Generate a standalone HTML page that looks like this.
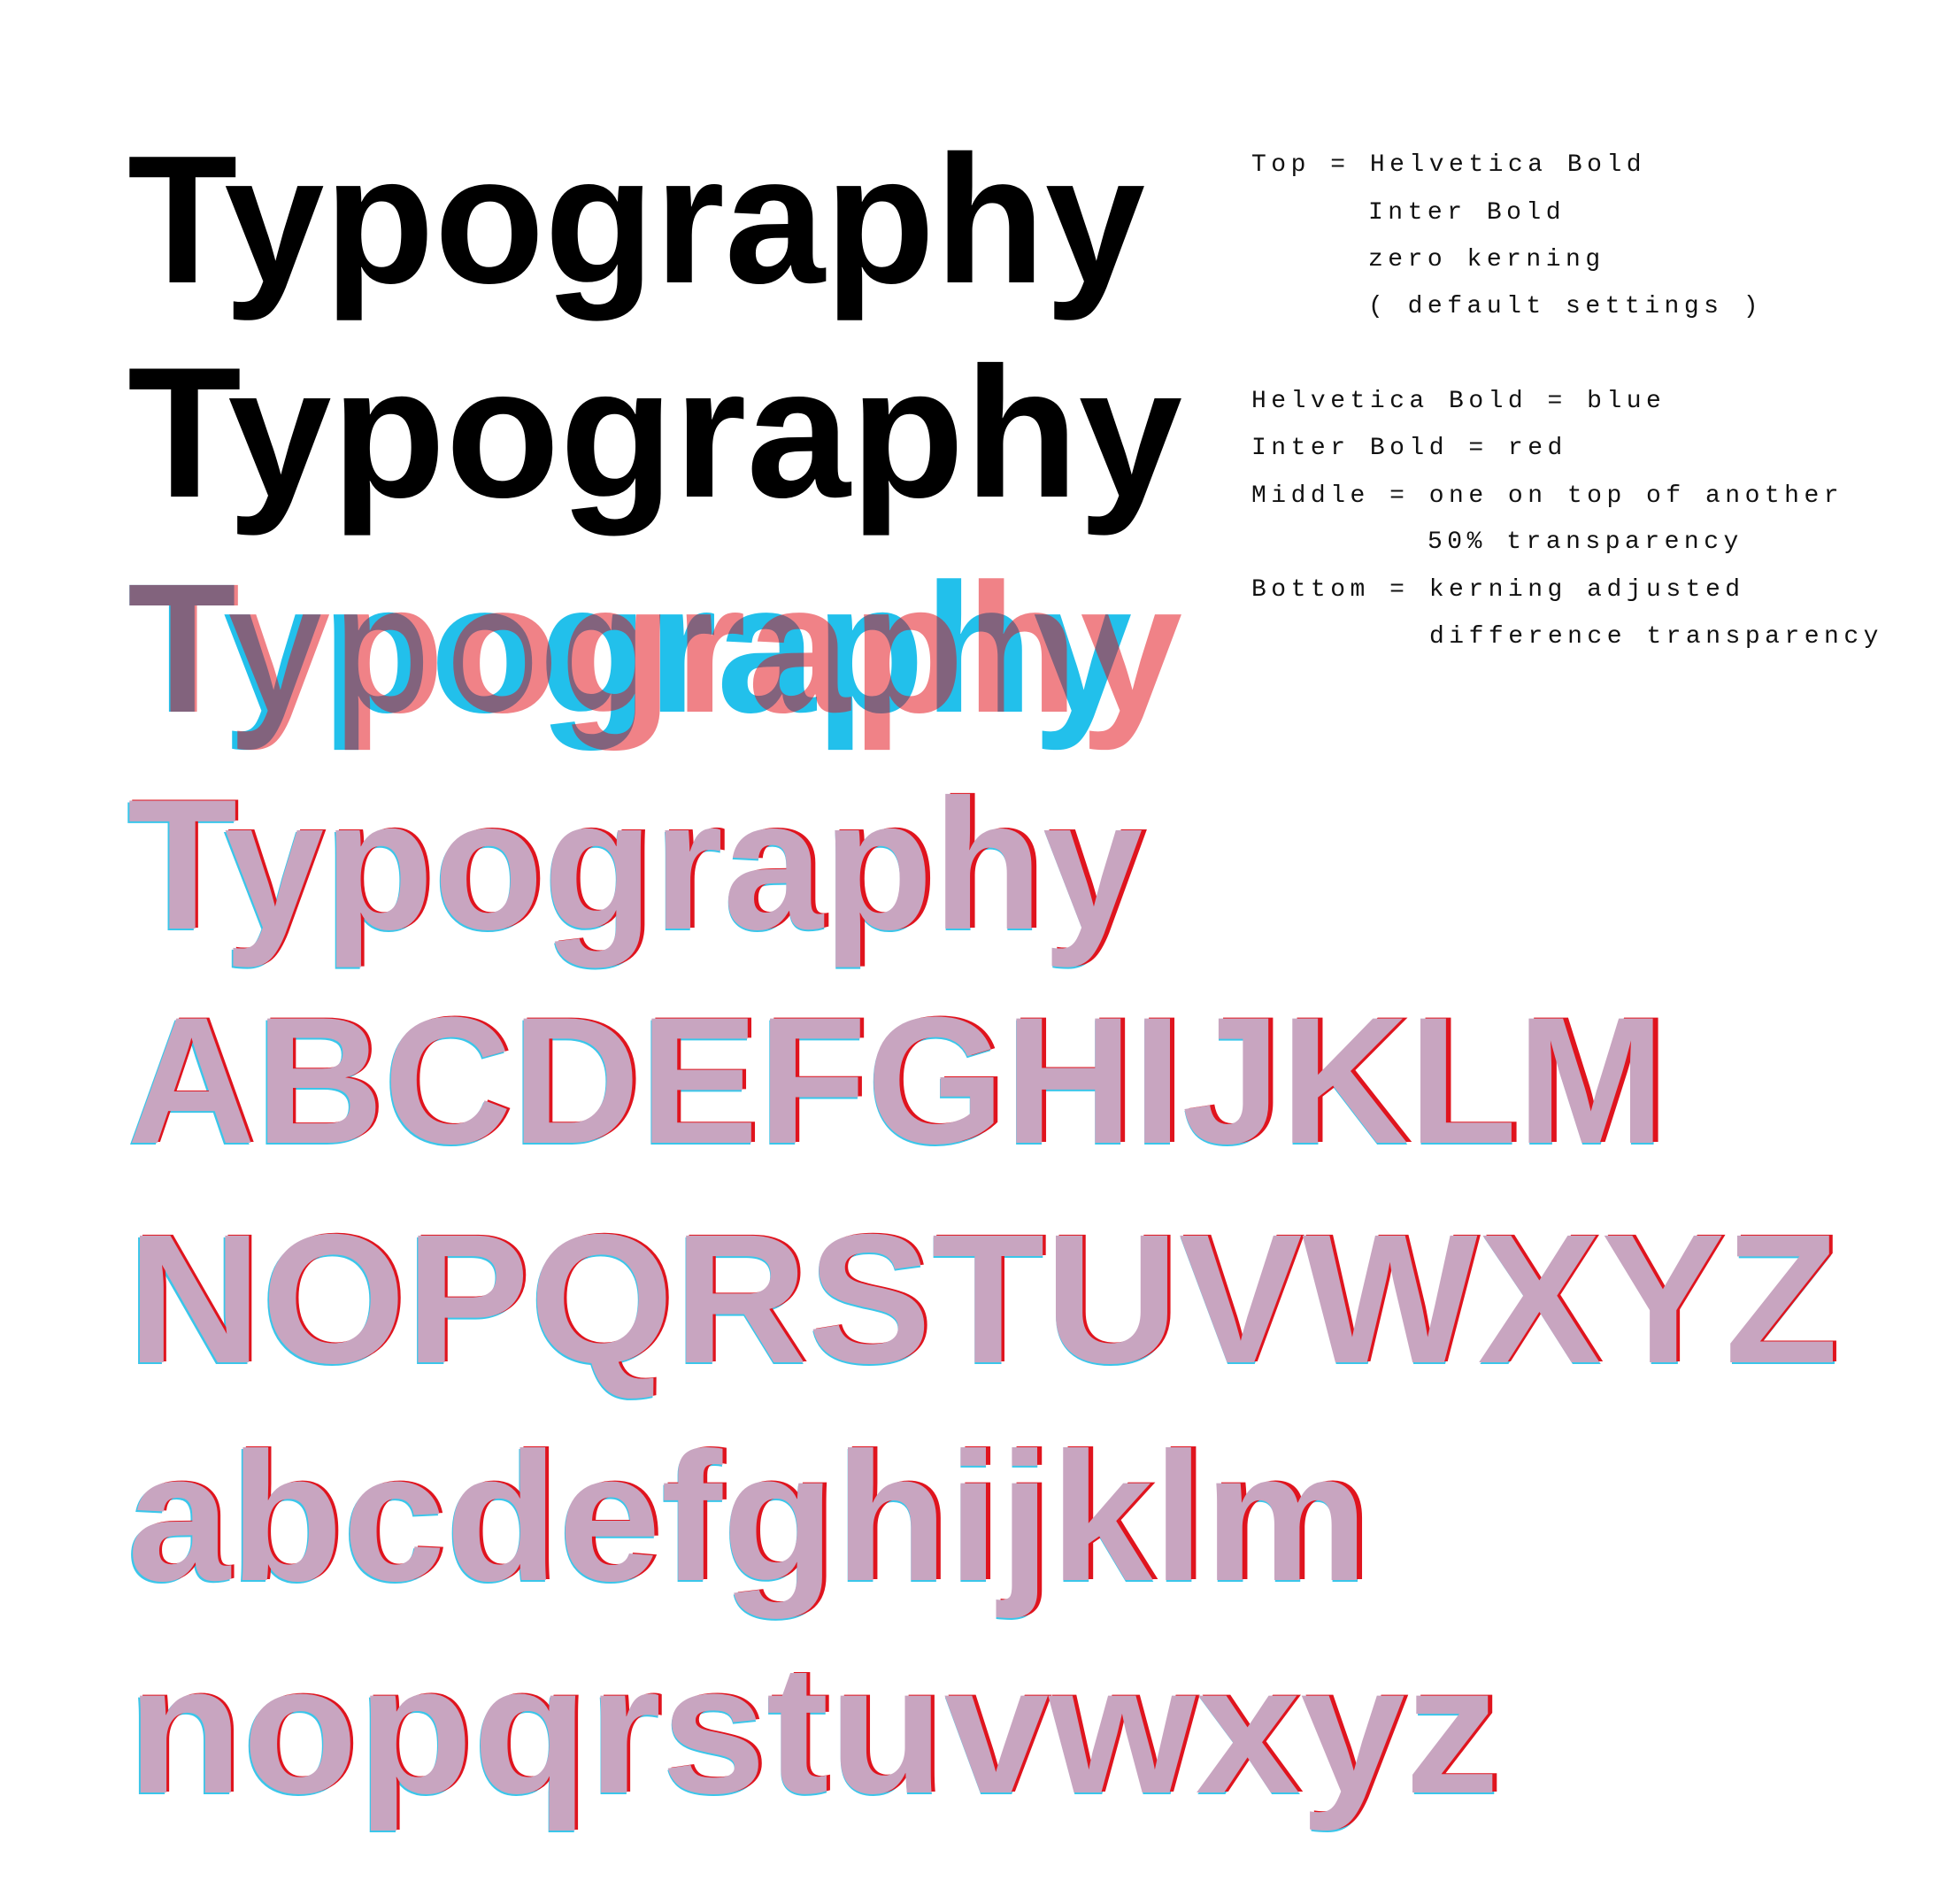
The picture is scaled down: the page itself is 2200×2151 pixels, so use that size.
<!DOCTYPE html>
<html><head><meta charset="utf-8"><style>
html,body{margin:0;padding:0;background:#fff;width:2200px;height:2151px;overflow:hidden}
svg{display:block}
.b{font-family:"Liberation Sans",Arial,sans-serif;font-weight:bold}
.m{font-family:"Liberation Mono",monospace;font-size:28px;fill:#111;letter-spacing:5.5px}
</style></head><body>
<svg width="2200" height="2151" viewBox="0 0 2200 2151" xmlns="http://www.w3.org/2000/svg">
<g class="b" transform="translate(-4,-10)">
<text x="148" y="329" font-size="206" textLength="1150" lengthAdjust="spacingAndGlyphs">Typography</text>
<text x="148" y="571" font-size="210" textLength="1192" lengthAdjust="spacingAndGlyphs">Typography</text>

<text x="148" y="814" font-size="208" fill="#22c0eb" textLength="1135" lengthAdjust="spacingAndGlyphs">Typography</text>
<text x="148" y="814" font-size="208" fill="#e1060f" fill-opacity="0.5" textLength="1192" lengthAdjust="spacing">Typography</text>

<g font-size="210">
<text x="146" y="1061" fill="#3ac6ea" textLength="1150" lengthAdjust="spacingAndGlyphs">Typography</text>
<text x="151" y="1058" fill="#e0141e" textLength="1150" lengthAdjust="spacingAndGlyphs">Typography</text>
<text x="148" y="1059" fill="#c8a5c0" textLength="1147" lengthAdjust="spacingAndGlyphs">Typography</text>
</g>
<g font-size="204">
<text x="146" y="1303" fill="#3ac6ea" textLength="1740" lengthAdjust="spacingAndGlyphs">ABCDEFGHIJKLM</text>
<text x="151" y="1300" fill="#e0141e" textLength="1740" lengthAdjust="spacingAndGlyphs">ABCDEFGHIJKLM</text>
<text x="148" y="1301" fill="#c8a5c0" textLength="1737" lengthAdjust="spacingAndGlyphs">ABCDEFGHIJKLM</text>
</g>
<g font-size="208">
<text x="146" y="1551" fill="#3ac6ea" textLength="1937" lengthAdjust="spacingAndGlyphs">NOPQRSTUVWXYZ</text>
<text x="151" y="1548" fill="#e0141e" textLength="1934" lengthAdjust="spacingAndGlyphs">NOPQRSTUVWXYZ</text>
<text x="148" y="1549" fill="#c8a5c0" textLength="1933" lengthAdjust="spacingAndGlyphs">NOPQRSTUVWXYZ</text>
</g>
<g font-size="207">
<text x="146" y="1797" fill="#3ac6ea" textLength="1405" lengthAdjust="spacingAndGlyphs">abcdefghijklm</text>
<text x="151" y="1794" fill="#e0141e" textLength="1405" lengthAdjust="spacingAndGlyphs">abcdefghijklm</text>
<text x="148" y="1795" fill="#c8a5c0" textLength="1402" lengthAdjust="spacingAndGlyphs">abcdefghijklm</text>
<text x="146" y="2037" fill="#3ac6ea" textLength="1554" lengthAdjust="spacingAndGlyphs">nopqrstuvwxyz</text>
<text x="151" y="2034" fill="#e0141e" textLength="1552" lengthAdjust="spacingAndGlyphs">nopqrstuvwxyz</text>
<text x="148" y="2035" fill="#c8a5c0" textLength="1550" lengthAdjust="spacingAndGlyphs">nopqrstuvwxyz</text>
</g>
</g>
<g class="m" xml:space="preserve">
<text x="1414" y="193">Top = Helvetica Bold</text>
<text x="1546" y="247">Inter Bold</text>
<text x="1546" y="300">zero kerning</text>
<text x="1546" y="353">( default settings )</text>
<text x="1414" y="460">Helvetica Bold = blue</text>
<text x="1414" y="513">Inter Bold = red</text>
<text x="1414" y="567">Middle = one on top of another</text>
<text x="1613" y="619">50% transparency</text>
<text x="1414" y="673">Bottom = kerning adjusted</text>
<text x="1615" y="726">difference transparency</text>
</g>
</svg>
</body></html>
